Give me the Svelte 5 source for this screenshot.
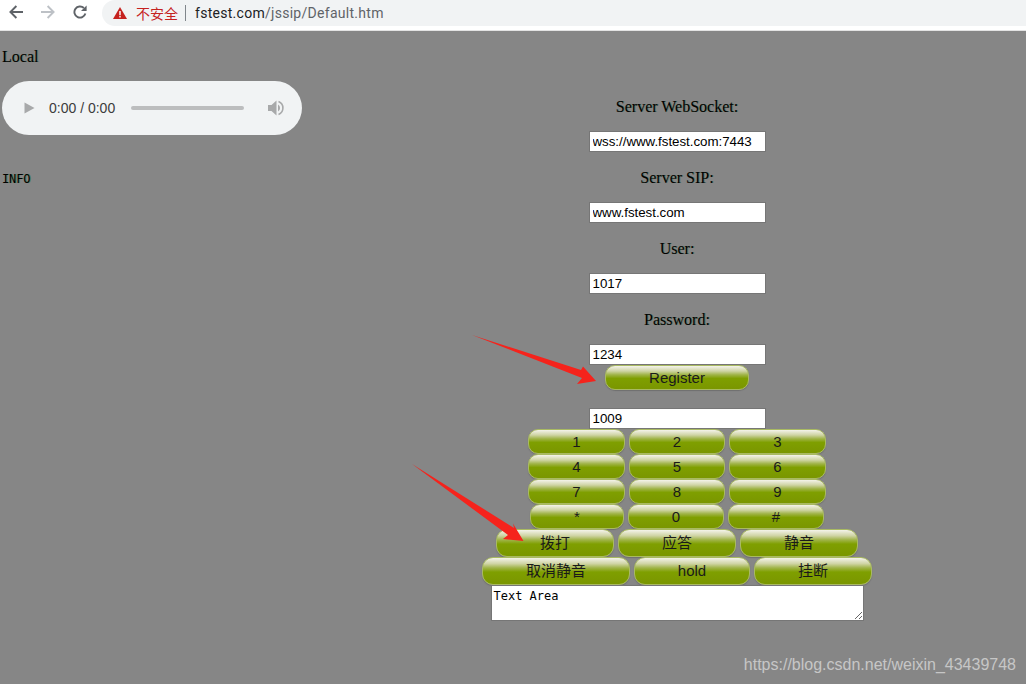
<script>
  const fields = [
    { label: 'Server WebSocket:', value: 'wss://www.fstest.com:7443' },
    { label: 'Server SIP:', value: 'www.fstest.com' },
    { label: 'User:', value: '1017' },
    { label: 'Password:', value: '1234' }
  ];
  const keypad = [
    [['1', 'k97'], ['2', 'k96'], ['3', 'k97']],
    [['4', 'k97'], ['5', 'k96'], ['6', 'k97']],
    [['7', 'k97'], ['8', 'k96'], ['9', 'k97']],
    [['*', 'k94'], ['0', 'k96'], ['#', 'k96']]
  ];
</script>

<div class="page">
  <header class="bar">
    <svg class="nav" width="14" height="14" viewBox="0 0 14 14"><path d="M14 7H1.8M7.4 1 1.4 7l6 6" fill="none" stroke="#5f6368" stroke-width="1.9"/></svg>
    <svg class="nav" width="14" height="14" viewBox="0 0 14 14"><path d="M0 7h12.2M6.6 1l6 6-6 6" fill="none" stroke="#bdc1c6" stroke-width="1.9"/></svg>
    <svg class="nav" width="14" height="14" viewBox="0 0 14 14"><path d="M12.4 8.6A5.6 5.6 0 1 1 10.9 3" fill="none" stroke="#5f6368" stroke-width="1.9"/><path d="M13.6 0.4V6H8Z" fill="#5f6368"/></svg>
    <div class="omni">
      <svg width="14" height="12" viewBox="0 0 14 12"><path d="M7 0 14 12H0Z" fill="#c5221f"/><path d="M6.3 4h1.4v4.2H6.3zM6.3 9h1.4v1.4H6.3z" fill="#fff"/></svg>
      <span class="warn">不安全</span>
      <span class="sep"></span>
      <span class="url">fstest.com<span class="dim">/jssip/Default.htm</span></span>
    </div>
  </header>

  <main class="body">
    <section class="left">
      <p>Local</p>
      <div class="audio">
        <svg width="11" height="12" viewBox="0 0 11 12"><path d="M0.5 0.5 10.5 6 0.5 11.5Z" fill="#a8a9aa"/></svg>
        <span class="time">0:00 / 0:00</span>
        <span class="track"></span>
        <svg width="17" height="16" viewBox="0 0 17 16"><path d="M0 5h3.5L8.5 0.5v15L3.5 11H0Z" fill="#a8a9aa"/><path d="M10 4.5a4 4 0 0 1 0 7Z" fill="#a8a9aa"/><path d="M10.5 1.5a7 7 0 0 1 0 13" fill="none" stroke="#a8a9aa" stroke-width="1.6"/></svg>
      </div>
      <pre class="info">INFO</pre>
    </section>

    <section class="center">
      {#each fields as f}
        <p>{f.label}</p>
        <input class="field" value={f.value} />
      {/each}
      <button class="btn register">Register</button>
      <input class="field dial" value="1009" />
      {#each keypad as row}
        <div class="row">
          {#each row as [k, cls]}<button class="btn {cls}">{k}</button>{/each}
        </div>
      {/each}
      <div class="row">
        <button class="btn tall w118">拨打</button>
        <button class="btn tall w118">应答</button>
        <button class="btn tall w118">静音</button>
      </div>
      <div class="row">
        <button class="btn tall w148">取消静音</button>
        <button class="btn tall w116">hold</button>
        <button class="btn tall w118">挂断</button>
      </div>
      <textarea class="log">Text Area</textarea>
    </section>
  </main>

  <svg class="arrows" width="1026" height="684" viewBox="0 0 1026 684">
    <path d="M472 335 581 370 583 366.5 596 381 577 384 582 378Z" fill="#f5231c"/>
    <path d="M412 464 514 528 513 523.5 523.5 541 503 539 508 535Z" fill="#f5231c"/>
  </svg>
  <div class="mark">https://blog.csdn.net/weixin_43439748</div>
</div>

<style>
  :global(body) { margin: 0; background: #868686; }
  .page {
    position: relative;
    height: 684px;
    overflow: hidden;
    background: #868686;
    font-family: "Liberation Serif", serif;
    font-size: 16px;
    color: #000;
  }
  .bar {
    height: 30px;
    display: flex;
    align-items: flex-start;
    background: #fff;
    border-bottom: 1px solid #e3e3e3;
  }
  .nav { margin: 5px 18px 0 0; flex: none; }
  .nav:first-child { margin-left: 9px; }
  .omni {
    flex: 1;
    height: 26px;
    margin-left: -3px;
    display: flex;
    align-items: center;
    padding-left: 11px;
    background: #f1f3f4;
    border-radius: 13px 0 0 13px;
    font-family: "Roboto", "Noto Sans CJK SC", sans-serif;
    font-size: 14px;
  }
  .warn { margin-left: 9px; color: #c5221f; font-family: "Noto Sans CJK SC", sans-serif; }
  .sep { width: 1px; height: 16px; margin: 0 9px 0 7px; background: #80868b; }
  .url { color: #202124; letter-spacing: 0.28px; }
  .dim { color: #5f6368; }

  .body { display: flex; }
  .left { width: 328px; flex: none; padding-left: 2px; box-sizing: border-box; }
  p {
    margin: 16px 0;
    height: 18px;
    line-height: 19px;
    text-shadow: 1px 0 0 rgba(0, 90, 0, 0.3);
  }
  .audio {
    width: 300px;
    height: 54px;
    border-radius: 27px;
    background: #f1f3f4;
    display: flex;
    align-items: center;
    font-family: "Liberation Sans", sans-serif;
    font-size: 14px;
    color: #3c3c3c;
  }
  .audio svg:first-child { margin-left: 22px; }
  .time { margin-left: 14px; }
  .track { width: 113px; height: 4px; margin: 0 24px 0 16px; border-radius: 2px; background: #bcbdbe; }
  .info {
    margin: 36px 0 0;
    font-family: "DejaVu Sans Mono", monospace;
    font-size: 12px;
    line-height: 16px;
    color: #000;
    text-shadow: 1px 0 0 rgba(0, 110, 0, 0.4);
    letter-spacing: -0.1px;
  }

  .center {
    flex: 1;
    display: flex;
    flex-direction: column;
    align-items: center;
    padding-top: 50px;
  }
  .field {
    width: 177px;
    height: 21px;
    box-sizing: border-box;
    padding: 1px 3px;
    border: 1px solid #767676;
    border-radius: 0;
    background: #fff;
    font-family: "Liberation Sans", sans-serif;
    font-size: 13.33px;
    letter-spacing: -0.03px;
    color: #000;
  }
  .dial { margin-top: 18px; }
  .btn {
    box-sizing: border-box;
    height: 25px;
    padding: 0;
    border: 1px solid #a9ba62;
    border-radius: 10px;
    background: linear-gradient(#f4f3ea 0%, #cfd4a4 22%, #a0b448 38%, #7f9f00 54%, #7a9600 100%);
    box-shadow: 0 1px 1px rgba(70, 70, 70, 0.35);
    font-family: "Liberation Sans", "Noto Sans CJK SC", sans-serif;
    font-size: 15px;
    line-height: 20px;
    color: #1a1a1a;
  }
  .register { width: 144px; }
  .row { display: flex; gap: 4px; justify-content: center; }
  .k97 { width: 97px; }
  .k96 { width: 96px; }
  .k94 { width: 94px; }
  .tall { height: 28px; border-radius: 11px; }
  .w118 { width: 118px; }
  .w148 { width: 148px; }
  .w116 { width: 116px; }
  .log {
    display: block;
    width: 373px;
    height: 36px;
    box-sizing: border-box;
    margin: 0;
    padding: 3px 2px 2px;
    border: 1px solid #767676;
    border-radius: 0;
    background: #fff;
    font-family: "DejaVu Sans Mono", monospace;
    font-size: 12px;
    color: #000;
  }
  .arrows { position: absolute; inset: 0; pointer-events: none; }
  .mark {
    position: absolute;
    right: 10px;
    top: 656px;
    font-family: "Liberation Sans", sans-serif;
    font-size: 16px;
    line-height: 18px;
    color: #c6c6c6;
  }
</style>
